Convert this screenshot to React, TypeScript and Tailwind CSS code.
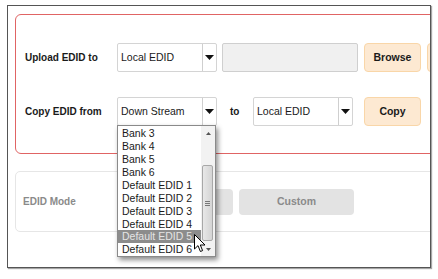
import React from "react";

const font = { fontFamily: '"Liberation Sans", Arial, sans-serif' };

function Arrow() {
  return (
    <svg width="9" height="5" viewBox="0 0 9 5">
      <path d="M0 0 L9 0 L4.5 5 Z" fill="#111" />
    </svg>
  );
}

function Select({ value, w }: { value: string; w: string }) {
  return (
    <div className={`flex h-[29px] ${w} shrink-0 items-stretch rounded-[2px] border border-[#d4d4d4] bg-white`}>
      <div className="flex flex-1 items-center pl-[3px] text-[10.5px] text-[#1a1a1a]">{value}</div>
      <div className="flex w-[14px] items-center justify-center border-l border-[#cfcfcf]">
        <Arrow />
      </div>
    </div>
  );
}

function OrangeButton({ label }: { label: string }) {
  return (
    <div className="flex h-[29px] w-[57px] shrink-0 items-center justify-center rounded-[4px] border border-[#f9d6a8] bg-[#fde9d2] text-[10.5px] font-bold text-[#1a1a1a]">
      {label}
    </div>
  );
}

const items = [
  "Bank 3",
  "Bank 4",
  "Bank 5",
  "Bank 6",
  "Default EDID 1",
  "Default EDID 2",
  "Default EDID 3",
  "Default EDID 4",
  "Default EDID 5",
  "Default EDID 6",
];

export default function App() {
  return (
    <div className="h-[279px] w-[438px] bg-white pl-[7px] pt-[5px]" style={font}>
      <div className="relative h-[263px] w-[424px] overflow-hidden border border-[#555] shadow-[1px_1px_1px_rgba(0,0,0,0.35)]">
        {/* Red panel */}
        <div className="ml-[7px] mt-[8px] h-[140px] w-[440px] rounded-[6px] border border-[#e06464] pt-[28px]">
          <div className="flex items-center pl-[9px]">
            <div className="w-[92px] shrink-0 text-[10px] font-bold text-[#1a1a1a]">Upload EDID to</div>
            <Select value="Local EDID" w="w-[100px]" />
            <div className="ml-[5px] h-[29px] w-[136px] shrink-0 rounded-[2px] border border-[#cfcfcf] bg-[#f0f0f0]" />
            <div className="ml-[6px]">
              <OrangeButton label="Browse" />
            </div>
            <div className="ml-[6px]">
              <OrangeButton label="" />
            </div>
          </div>
          <div className="mt-[25px] flex items-center pl-[9px]">
            <div className="w-[92px] shrink-0 text-[10px] font-bold text-[#1a1a1a]">Copy EDID from</div>
            <Select value="Down Stream" w="w-[100px]" />
            <div className="ml-[13px] w-[23px] shrink-0 text-[10px] font-bold text-[#1a1a1a]">to</div>
            <Select value="Local EDID" w="w-[100px]" />
            <div className="ml-[11px]">
              <OrangeButton label="Copy" />
            </div>
          </div>
        </div>

        {/* EDID Mode panel */}
        <div className="ml-[7px] mt-[17px] flex h-[61px] w-[440px] items-center rounded-[5px] border border-[#e6e6e6] pl-[7px]">
          <div className="w-[95px] shrink-0 text-[10px] font-bold text-[#8a8a8a]">EDID Mode</div>
          <div className="h-[26px] w-[115px] shrink-0 rounded-[4px] bg-[#e3e3e3]" />
          <div className="ml-[6px] flex h-[26px] w-[115px] shrink-0 items-center justify-center rounded-[4px] bg-[#e3e3e3] text-[10.5px] font-bold text-[#8a8a8a]">
            Custom
          </div>
        </div>

        {/* Dropdown list */}
        <div className="absolute left-[109px] top-[119px] flex h-[132px] w-[99px] border border-[#8a8a8a] bg-white shadow-[2px_3px_5px_rgba(0,0,0,0.45)]">
          <div className="flex flex-1 flex-col pt-[1px]">
            {items.map((it) => (
              <div
                key={it}
                className={`flex h-[13px] items-center pl-[4px] text-[10.5px] leading-none ${
                  it === "Default EDID 5" ? "bg-[#8c8c8c] text-[#e4e4e4]" : "text-[#1a1a1a]"
                }`}
              >
                {it}
              </div>
            ))}
          </div>
          <div className="relative w-[14px] shrink-0 bg-[#f2f2f2]">
            <div className="flex h-[14px] items-center justify-center">
              <svg width="5" height="3" viewBox="0 0 5 3">
                <path d="M0 3 L5 3 L2.5 0 Z" fill="#555" />
              </svg>
            </div>
            <div className="absolute left-[1px] top-[39px] flex h-[76px] w-[11px] items-center justify-center rounded-[2px] border border-[#a8a8a8] bg-gradient-to-r from-[#e8e8e8] to-[#d4d4d4]">
              <div className="flex flex-col gap-[1px]">
                <div className="h-px w-[5px] bg-[#777]" />
                <div className="h-px w-[5px] bg-[#777]" />
                <div className="h-px w-[5px] bg-[#777]" />
              </div>
            </div>
            <div className="absolute bottom-0 left-0 flex h-[14px] w-[14px] items-center justify-center">
              <svg width="5" height="3" viewBox="0 0 5 3">
                <path d="M0 0 L5 0 L2.5 3 Z" fill="#555" />
              </svg>
            </div>
          </div>
        </div>

        {/* Cursor */}
        <svg className="absolute left-[186px] top-[228px]" width="12" height="19" viewBox="0 0 12 19">
          <path d="M0.5 0.5 L0.5 15 L4 11.6 L6.4 17.5 L8.6 16.6 L6.3 11 L11 11 Z" fill="#fff" stroke="#000" strokeWidth="1" strokeLinejoin="round" />
        </svg>
      </div>
    </div>
  );
}
